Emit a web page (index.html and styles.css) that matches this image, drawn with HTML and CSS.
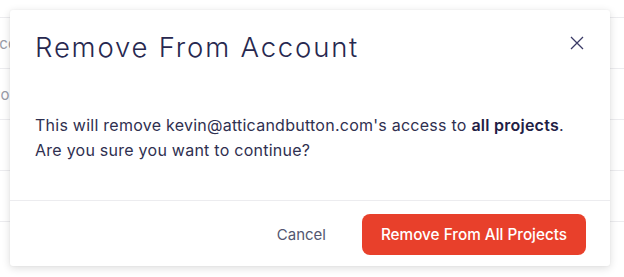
FILE: index.html
```html
<!DOCTYPE html>
<html>
<head>
<meta charset="utf-8">
<link rel="stylesheet" href="styles.css">
</head>
<body>
<div class="page">
  <div class="row"><span class="cell cell-a">Acc</span></div>
  <div class="row"><span class="cell cell-b">Po</span></div>
  <div class="row"></div>
  <div class="row"></div>
  <div class="row"></div>
</div>
<div class="modal">
  <div class="modal-header">
    <h1 class="modal-title">Remove From Account</h1>
    <button class="close" aria-label="Close">
      <svg width="14" height="14" viewBox="0 0 14 14"><path d="M1 1L13 13M13 1L1 13" stroke="#3a3a66" stroke-width="1.3" fill="none"/></svg>
    </button>
  </div>
  <div class="modal-body">
    <p>This will remove kevin@atticandbutton.com's access to <strong>all projects</strong>.<br>Are you sure you want to continue?</p>
  </div>
  <div class="modal-footer">
    <button class="btn-cancel">Cancel</button>
    <button class="btn-danger">Remove From All Projects</button>
  </div>
</div>
</body>
</html>
```
FILE: styles.css
```css
html, body {
  margin: 0;
  padding: 0;
  background: #fff;
  width: 624px;
  height: 277px;
  overflow: hidden;
  font-family: Inter, "Noto Sans", sans-serif;
}
.row {
  height: 50px;
  border-top: 1px solid #ececef;
  display: flex;
  align-items: center;
}
.row:first-child { margin-top: 17px; }
.cell {
  color: #9a9ca8;
  font-size: 15px;
}
.cell-a { margin-left: -11px; }
.cell-b { margin-left: -9px; }
.modal {
  position: absolute;
  left: 10px;
  top: 10px;
  width: 600px;
  height: 256px;
  background: #fff;
  border-radius: 3px;
  box-shadow: 0 2px 8px rgba(0,0,0,0.14), 0 0 2px rgba(0,0,0,0.06);
  display: flex;
  flex-direction: column;
}
.modal-header {
  display: flex;
  justify-content: space-between;
  align-items: flex-start;
  padding: 20px 26px 0 25px;
}
.modal-title {
  margin: 0;
  font-weight: 300;
  font-size: 27.5px;
  line-height: 34px;
  color: #27284f;
  letter-spacing: 1.8px;
}
.close {
  border: 0;
  background: none;
  padding: 0;
  margin-top: 6px;
  width: 14px;
  height: 14px;
  cursor: pointer;
}
.close svg { display: block; }
.modal-body {
  padding: 49px 25px 0 25px;
  flex: 1;
}
.modal-body p {
  margin: 0;
  font-size: 16px;
  line-height: 25px;
  letter-spacing: 0.25px;
  color: #2f3050;
}
.modal-body strong {
  font-weight: 600;
  color: #1f2045;
}
.modal-footer {
  border-top: 1px solid #ececef;
  display: flex;
  justify-content: flex-end;
  align-items: center;
  gap: 36px;
  padding: 13px 24px 11px 24px;
}
.btn-cancel {
  border: 0;
  background: none;
  font-family: inherit;
  font-size: 15px;
  color: #545770;
  padding: 0;
}
.btn-danger {
  border: 0;
  background: #e8402b;
  color: #fff;
  font-family: inherit;
  font-size: 15.3px;
  font-weight: 500;
  height: 41px;
  width: 224px;
  border-radius: 8px;
}
```
